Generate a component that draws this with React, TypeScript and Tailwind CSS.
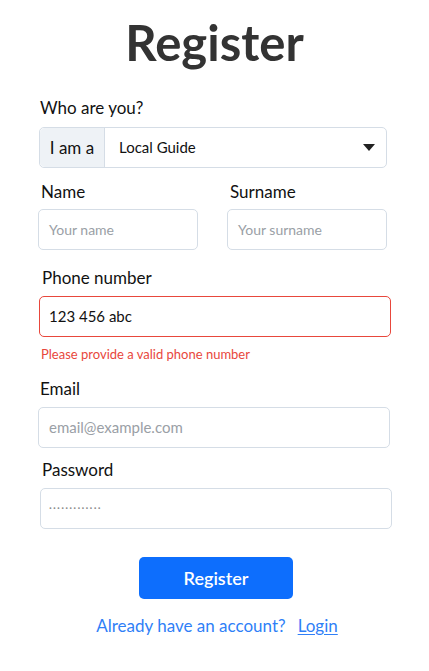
import React from 'react';

export default function App() {
  return (
    <div
      className="min-h-[671px] w-[429px] bg-white text-[#111]"
      style={{ fontFamily: 'Lato, "Open Sans", sans-serif' }}
    >
      <h1 className="pt-[14px] text-center text-[49px] font-bold leading-[56px] text-[#333]">
        Register
      </h1>

      <form className="px-[38px] pt-[26px]">
        {/* Role */}
        <div className="pl-[2px] text-[17px] leading-[24px]">Who are you?</div>
        <div className="mt-[7px] flex h-[41px] w-[348px] ml-[1px] rounded-[5px] border border-[#d5dde6]">
          <div className="flex w-[65px] items-center justify-center rounded-l-[5px] border-r border-[#d5dde6] bg-[#eef2f6] text-[17px]">
            I am a
          </div>
          <div className="flex flex-1 items-center justify-between pl-[14px] pr-[10px] text-[15px]">
            <span>Local Guide</span>
            <svg width="14" height="9" viewBox="0 0 14 9">
              <path d="M1 1h12L7 8z" fill="#222" />
            </svg>
          </div>
        </div>

        {/* Name / Surname */}
        <div className="mt-[12px] grid grid-cols-2 gap-[27px]">
          <div>
            <div className="pl-[3px] text-[17px] leading-[24px]">Name</div>
            <div className="mt-[5px] flex h-[41px] w-[160px] items-center rounded-[5px] border border-[#d5dde6] px-[10px] text-[14px] text-[#9aa0a6]">
              Your name
            </div>
          </div>
          <div className="-ml-[1px]">
            <div className="pl-[3px] text-[17px] leading-[24px]">Surname</div>
            <div className="mt-[5px] flex h-[41px] w-[160px] items-center rounded-[5px] border border-[#d5dde6] px-[10px] text-[14px] text-[#9aa0a6]">
              Your surname
            </div>
          </div>
        </div>

        {/* Phone */}
        <div className="mt-[16px] pl-[4px] text-[17px] leading-[24px]">Phone number</div>
        <div className="ml-[1px] mt-[6px] flex h-[41px] w-[352px] items-center rounded-[5px] border border-[#e8473c] px-[9px] text-[15px]">
          123 456 abc
        </div>
        <div className="mt-[8px] pl-[3px] text-[13px] leading-[18px] text-[#e8473c]">
          Please provide a valid phone number
        </div>

        {/* Email */}
        <div className="mt-[14px] pl-[2px] text-[17px] leading-[24px]">Email</div>
        <div className="mt-[6px] flex h-[41px] w-[352px] items-center rounded-[5px] border border-[#d5dde6] px-[10px] text-[15px] text-[#9aa0a6]">
          email@example.com
        </div>

        {/* Password */}
        <div className="mt-[10px] pl-[4px] text-[17px] leading-[24px]">Password</div>
        <div className="ml-[2px] mt-[6px] flex h-[41px] w-[352px] items-center rounded-[5px] border border-[#d5dde6] px-[8px] text-[11px] tracking-[1.2px] text-[#888]">
          ·············
        </div>

        <div className="mt-[28px] flex justify-center">
          <button
            type="button"
            className="ml-[3px] h-[42px] w-[154px] rounded-[5px] bg-[#0d6efd] text-[18px] font-semibold text-white"
          >
            Register
          </button>
        </div>

        <div className="ml-[5px] mt-[15px] flex justify-center gap-[12px] text-[17px] leading-[24px] text-[#2f7ff7]">
          <span>Already have an account?</span>
          <span className="underline underline-offset-2">Login</span>
        </div>
      </form>
    </div>
  );
}
